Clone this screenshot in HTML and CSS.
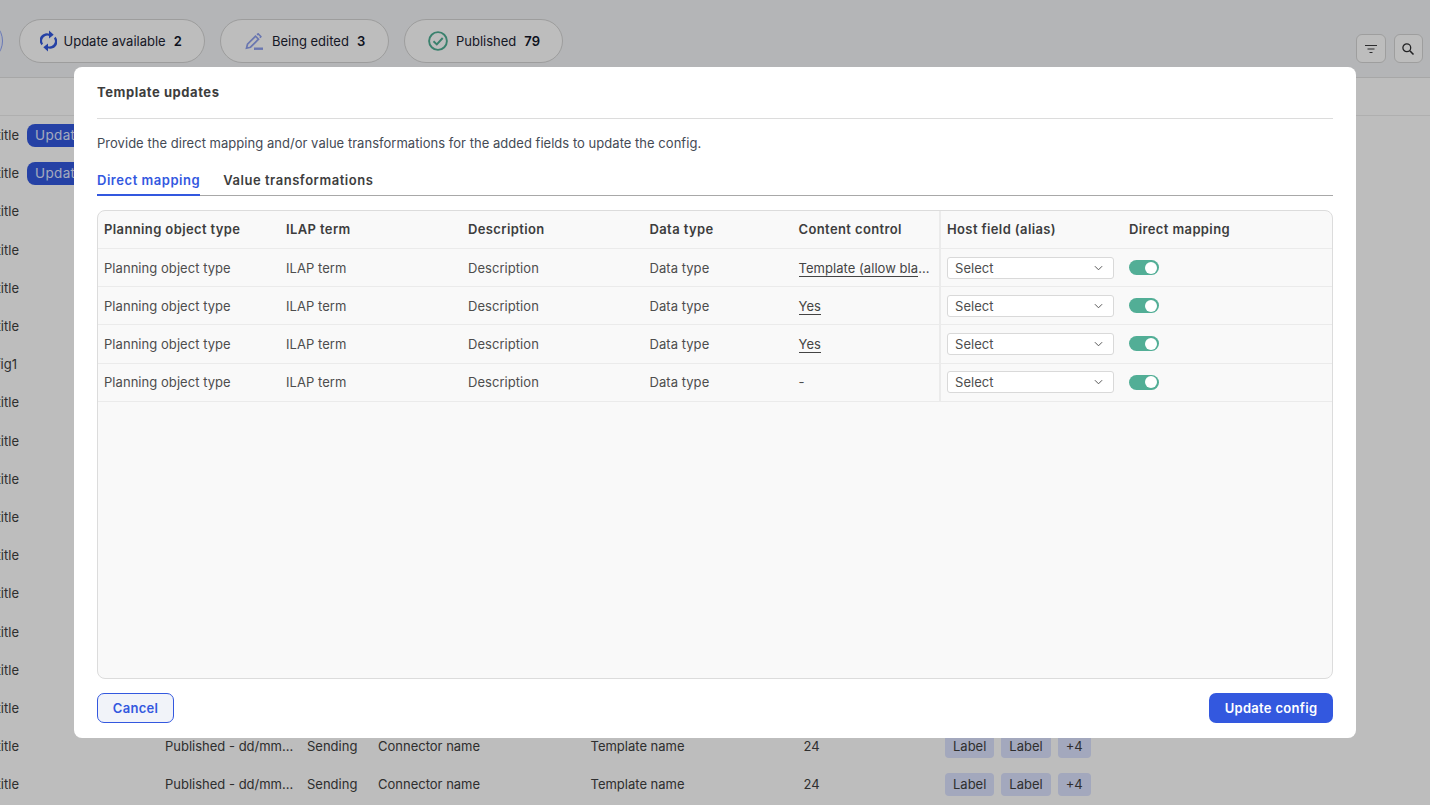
FILE: index.html
```html
<!DOCTYPE html>
<html lang="en">
<head>
<meta charset="utf-8">
<title>Template updates</title>
<link rel="stylesheet" href="styles.css">
</head>
<body>
<div class="page">
  <header class="topbar">
    <div class="pill pill-cut"></div>
    <div class="pill pill-update">
      <svg class="pill-icon" viewBox="0 0 17 22" fill="#3358df"><path d="M1.600 15.200A7 7 0 0 1 10 4.200L10 6.300A5.200 5.200 0 0 0 3 13.600Z"/><path d="M9 .6 13.700 4.700 9 8.600Z"/><path d="M15.400 6.800A7 7 0 0 1 7 17.800L7 15.700A5.200 5.200 0 0 0 14 8.400Z"/><path d="M8 21.400 3.300 17.300 8 13.400Z"/></svg>
      <span>Update available</span><b>2</b>
    </div>
    <div class="pill pill-edit">
      <svg class="pill-icon" viewBox="0 0 19 17" fill="none" stroke="#8fa0ee" stroke-width="1.700"><path d="M1.500 15.200 2.500 11.200 10.500 3.200 13.500 6.200 5.500 14.200Z"/><path d="M12 1.700 13.200 .9 15.800 3.500 15 4.700"/><path d="M9 15.700H18" stroke-width="2.400"/></svg>
      <span>Being edited</span><b>3</b>
    </div>
    <div class="pill pill-pub">
      <svg class="pill-icon pill-icon-lg" viewBox="0 0 20 20" fill="none" stroke="#4fae94" stroke-width="1.900"><circle cx="10" cy="10" r="8.900"/><path d="M5.500 10.300 8.800 13.500 14.700 7"/></svg>
      <span>Published</span><b>79</b>
    </div>
    <div class="tools">
      <button class="tool" aria-label="Filter"><svg viewBox="0 0 14 10" width="14" height="10" fill="none" stroke="#3c3c3e" stroke-width="1.100"><path d="M1 1.500H13M3.500 5H10.500M5.500 8.500H8.500"/></svg></button>
      <button class="tool" aria-label="Search"><svg viewBox="0 0 14 14" width="14" height="14" fill="none" stroke="#2f2f31" stroke-width="1.300"><circle cx="5.800" cy="5.800" r="3.900"/><path d="M8.800 8.800 12.500 12.500" stroke-width="1.600"/></svg></button>
    </div>
  </header>
  <div class="head-row"></div>
  <div class="rows">
    <div class="row"><span class="cut">Config title</span><span class="badge">Update</span></div>
    <div class="row"><span class="cut">Config title</span><span class="badge">Update</span></div>
    <div class="row"><span class="cut">Config title</span></div>
    <div class="row"><span class="cut">Config title</span></div>
    <div class="row"><span class="cut">Config title</span></div>
    <div class="row"><span class="cut">Config title</span></div>
    <div class="row"><span class="cut cut-tight">Config1</span></div>
    <div class="row"><span class="cut">Config title</span></div>
    <div class="row"><span class="cut">Config title</span></div>
    <div class="row"><span class="cut">Config title</span></div>
    <div class="row"><span class="cut">Config title</span></div>
    <div class="row"><span class="cut">Config title</span></div>
    <div class="row"><span class="cut">Config title</span></div>
    <div class="row"><span class="cut">Config title</span></div>
    <div class="row"><span class="cut">Config title</span></div>
    <div class="row"><span class="cut">Config title</span></div>
    <div class="row"><span class="cut">Config title</span><span class="c-status">Published - dd/mm...</span><span class="c-dir">Sending</span><span class="c-conn">Connector name</span><span class="c-tpl">Template name</span><span class="c-num">24</span><span class="c-labels"><i class="chip">Label</i><i class="chip">Label</i><i class="chip">+4</i></span></div>
    <div class="row"><span class="cut">Config title</span><span class="c-status">Published - dd/mm...</span><span class="c-dir">Sending</span><span class="c-conn">Connector name</span><span class="c-tpl">Template name</span><span class="c-num">24</span><span class="c-labels"><i class="chip">Label</i><i class="chip">Label</i><i class="chip">+4</i></span></div>
  </div>
</div>

<div class="overlay"></div>

<section class="modal">
  <h2 class="modal-title">Template updates</h2>
  <p class="modal-desc">Provide the direct mapping and/or value transformations for the added fields to update the config.</p>
  <nav class="tabs">
    <span class="tab tab-active">Direct mapping</span>
    <span class="tab">Value transformations</span>
  </nav>
  <div class="table">
    <div class="t-row t-head">
      <div>Planning object type</div><div>ILAP term</div><div>Description</div><div>Data type</div><div class="t-fixed">Content control</div><div>Host field (alias)</div><div>Direct mapping</div>
    </div>
    <div class="t-row">
      <div>Planning object type</div><div>ILAP term</div><div>Description</div><div>Data type</div><div class="t-fixed"><span class="link">Template (allow bla</span>...</div>
      <div><div class="select">Select<svg viewBox="0 0 10 6" width="9" height="6" fill="none" stroke="#555" stroke-width="1.100"><path d="M1 1 5 5 9 1"/></svg></div></div><div><span class="toggle"></span></div>
    </div>
    <div class="t-row">
      <div>Planning object type</div><div>ILAP term</div><div>Description</div><div>Data type</div><div class="t-fixed"><span class="link">Yes</span></div>
      <div><div class="select">Select<svg viewBox="0 0 10 6" width="9" height="6" fill="none" stroke="#555" stroke-width="1.100"><path d="M1 1 5 5 9 1"/></svg></div></div><div><span class="toggle"></span></div>
    </div>
    <div class="t-row">
      <div>Planning object type</div><div>ILAP term</div><div>Description</div><div>Data type</div><div class="t-fixed"><span class="link">Yes</span></div>
      <div><div class="select">Select<svg viewBox="0 0 10 6" width="9" height="6" fill="none" stroke="#555" stroke-width="1.100"><path d="M1 1 5 5 9 1"/></svg></div></div><div><span class="toggle"></span></div>
    </div>
    <div class="t-row">
      <div>Planning object type</div><div>ILAP term</div><div>Description</div><div>Data type</div><div class="t-fixed">-</div>
      <div><div class="select">Select<svg viewBox="0 0 10 6" width="9" height="6" fill="none" stroke="#555" stroke-width="1.100"><path d="M1 1 5 5 9 1"/></svg></div></div><div><span class="toggle"></span></div>
    </div>
  </div>
  <footer class="modal-foot">
    <button class="btn btn-ghost">Cancel</button>
    <button class="btn btn-primary">Update config</button>
  </footer>
</section>
</body>
</html>
```
FILE: styles.css
```css
* { box-sizing: border-box; }
html, body { margin: 0; height: 100%; overflow: hidden; }
body { font-family: Inter, "Liberation Sans", sans-serif; font-size: 13px; color: #404040; background: #fff; }

.page { height: 805px; overflow: hidden; background: #fff; }
.topbar { height: 78px; background: #f3f5f7; border-bottom: 1px solid #e2e2e2; display: flex; align-items: flex-start; padding-top: 19px; gap: 15px; margin-left: -41px; }
.pill { height: 44px; border: 1px solid #d4d4d4; border-radius: 22px; background: #fff; display: flex; align-items: center; gap: 8px; font-size: 13px; color: #1c2333; flex: none; }
.pill b { font-weight: 600; color: #12182b; }
.pill-cut { width: 44px; margin-right: 1px; border-color: #8ea3f5; background: #eef1ff; }
.pill-update { width: 186px; padding-left: 20px; }
.pill-update .pill-icon { width: 17px; height: 22px; margin-right: -1.500px; }
.pill-edit { width: 169px; padding-left: 24px; }
.pill-pub { width: 159px; padding-left: 23px; }
.pill-icon { width: 19px; height: 17px; flex: none; }
.pill .pill-icon-lg { width: 20px; height: 20px; }
.tools { margin-left: auto; display: flex; gap: 8px; margin-top: 15px; margin-right: 7px; }
.tool { width: 29.500px; height: 29px; padding: 0; border: 1px solid #d6d6d6; border-radius: 6px; background: #fff; display: flex; align-items: center; justify-content: center; }

.head-row { height: 38px; background: #fff; border-bottom: 1px solid #ececec; }
.rows { display: flex; flex-direction: column; }
.row { position: relative; height: 38.200px; display: flex; align-items: center; white-space: nowrap; flex: none; }
.cut { width: 19px; display: flex; justify-content: flex-end; overflow: hidden; flex: none; }
.cut-tight { width: 17px; }
.badge { margin-left: 8px; height: 23px; padding: 0 8px; border-radius: 8px; background: #3358df; color: #dfe5ff; font-size: 13.500px; letter-spacing: 0.35px; line-height: 22px; width: 80px; overflow: hidden; }
.c-status { margin-left: 146px; width: 142px; flex: none; }
.c-dir { width: 71px; flex: none; }
.c-conn { width: 212.500px; flex: none; }
.c-tpl { width: 213px; flex: none; }
.c-num { width: 141.500px; flex: none; }
.c-labels { display: flex; gap: 7px; }
.chip { font-style: normal; height: 23px; line-height: 23px; padding: 0 8px; border-radius: 4px; background: #dce3ff; }

.overlay { position: fixed; inset: 0; background: rgba(0, 0, 0, 0.26); }

.modal { position: fixed; left: 74px; top: 67px; width: 1282px; height: 671px; background: #fff; border-radius: 8px; padding: 0 23px; display: flex; flex-direction: column; }
.modal-title { margin: 0; height: 52px; border-bottom: 1px solid #dcdcdc; font-size: 13px; font-weight: 700; color: #3d3d3d; line-height: 51px; letter-spacing: 0.55px; }
.modal-desc { margin: 0; height: 47px; line-height: 48px; color: #444a55; font-size: 13px; letter-spacing: 0.03px; }
.tabs { display: flex; gap: 23px; height: 30px; border-bottom: 1px solid #a8a8a8; }
.tab { height: 30px; padding-top: 5px; line-height: 18px; font-size: 13px; font-weight: 600; color: #3d3d3d; letter-spacing: 0.54px; }
.tab-active { color: #3358df; border-bottom: 2px solid #3358df; }
.table { margin-top: 14px; height: 469px; background: #f9f9f9; border: 1px solid #dcdcdc; border-radius: 8px; }
.t-row { display: grid; grid-template-columns: 182px 182px 181.500px 149px 148.500px 182px 1fr; height: 38.200px; border-bottom: 1px solid #ebebeb; align-items: stretch; color: #4d4d4d; }
.t-row > div { display: flex; align-items: center; padding-left: 6px; white-space: nowrap; letter-spacing: 0.05px; overflow: hidden; }
.t-head { height: 38px; color: #3d3d3d; font-weight: 600; }
.t-head > div { letter-spacing: 0.38px; padding-bottom: 1px; }
.t-row > .t-fixed { border-right: 2px solid #ebebeb; }
.link { border-bottom: 1px solid #444; line-height: 15px; color: #444; margin-top: 2px; }
.select { width: 167px; height: 22px; background: #fff; border: 1px solid #d9d9d9; border-radius: 3px; display: flex; align-items: center; justify-content: space-between; padding: 0 10px 0 7px; color: #4d4d4d; }
.toggle { position: relative; display: block; width: 30px; height: 15px; border-radius: 8px; background: #52ae96; }
.toggle::after { content: ""; position: absolute; right: 2px; top: 1.500px; width: 12px; height: 12px; border-radius: 50%; background: #fff; }
.modal-foot { display: flex; justify-content: space-between; margin-top: 14px; }
.btn { height: 30px; border-radius: 7px; font-family: Inter, "Liberation Sans", sans-serif; font-size: 13px; font-weight: 600; letter-spacing: 0.3px; padding: 0; }
.btn-ghost { width: 77px; background: #f1f3f9; border: 1px solid #3358df; color: #3358df; }
.btn-primary { width: 124px; background: #3358df; border: 0; color: #fff; }
```
